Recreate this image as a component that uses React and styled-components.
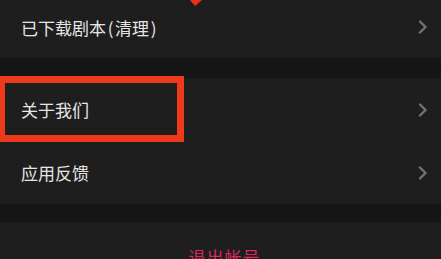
import React from "react";
import styled, { createGlobalStyle } from "styled-components";

const Global = createGlobalStyle`
  html, body {
    margin: 0;
    padding: 0;
    background: #151515;
    overflow: hidden;
  }
  body {
    font-family: "Noto Sans CJK SC", "Noto Sans", sans-serif;
  }
`;

const Page = styled.div`
  position: relative;
  width: 441px;
  height: 259px;
  overflow: hidden;
  background: #151515;
  display: flex;
  flex-direction: column;
`;

const Group = styled.div`
  display: flex;
  flex-direction: column;
  background: #1e1e1e;
  margin-bottom: ${(p) => p.gap || 0}px;
`;

const Row = styled.div`
  position: relative;
  height: ${(p) => p.h || 63}px;
  padding: 0 13px 0 21px;
  padding-bottom: ${(p) => p.pb || 0}px;
  box-sizing: border-box;
  display: flex;
  align-items: center;
  justify-content: space-between;
`;

const Label = styled.span`
  font-size: 17px;
  color: #e6e6e6;
  letter-spacing: 0;
`;

const Paren = styled.span`
  display: inline-block;
  width: 9px;
  text-align: center;
`;

const Chevron = () => (
  <svg width="10" height="14" viewBox="0 0 10 14">
    <path
      d="M2 1.5 L7.5 7 L2 12.5"
      fill="none"
      stroke="#727272"
      strokeWidth="2.4"
      strokeLinecap="round"
      strokeLinejoin="round"
    />
  </svg>
);

const Highlight = styled.div`
  position: absolute;
  left: -2px;
  top: -2px;
  width: 186px;
  height: 66px;
  box-sizing: border-box;
  border: 7px solid #ee3a1a;
`;

const ArrowTip = styled.svg`
  position: absolute;
  left: 186px;
  top: 0;
`;

const Logout = styled.div`
  flex: 1;
  background: #1e1e1e;
  display: flex;
  justify-content: center;
  padding-top: 22px;
  padding-left: 8px;
  font-size: 17px;
  color: #d8285c;
  letter-spacing: 1px;
`;

export default function App() {
  return (
    <>
      <Global />
      <Page>
        <Group gap={20}>
          <Row h={58} pb={4}>
            <Label>
              已下载剧本<Paren>(</Paren>清理<Paren>)</Paren>
            </Label>
            <Chevron />
          </Row>
        </Group>
        <Group gap={18}>
          <Row>
            <Label>关于我们</Label>
            <Chevron />
            <Highlight />
          </Row>
          <Row>
            <Label>应用反馈</Label>
            <Chevron />
          </Row>
        </Group>
        <Logout>退出帐号</Logout>
        <ArrowTip width="20" height="8" viewBox="0 0 20 8">
          <path d="M4 0 L16 0 L9 6 Z" fill="#e8321a" />
        </ArrowTip>
      </Page>
    </>
  );
}
